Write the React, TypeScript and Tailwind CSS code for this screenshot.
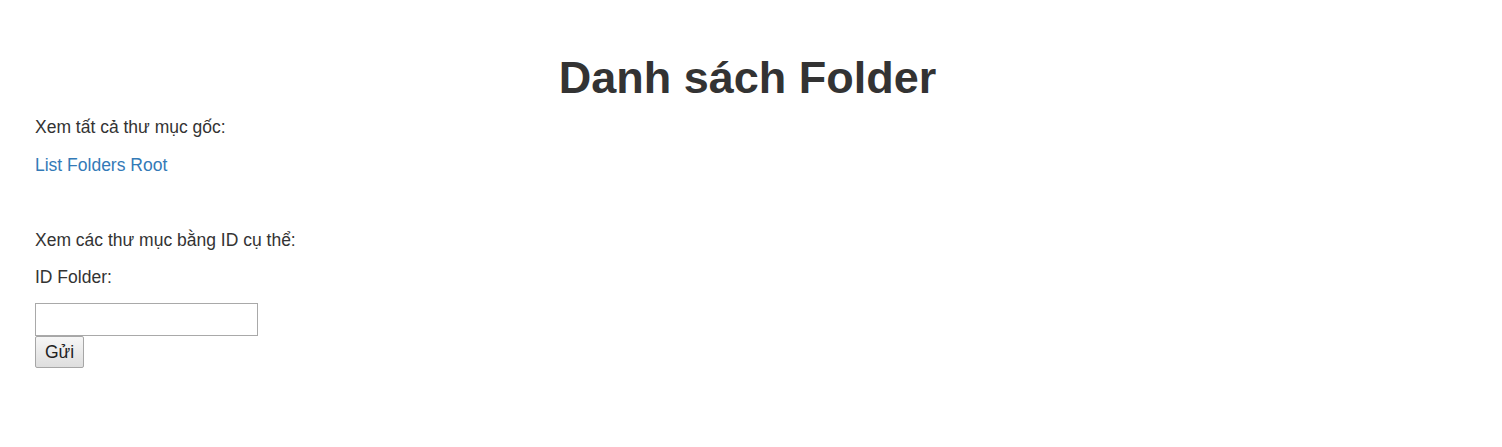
export default function App() {
  const handleSubmit = (event: any) => {
    event.preventDefault()
  }

  return (
    <div className="min-h-[447px] bg-white pl-[35px] pr-[42px] pt-[53px] font-['Liberation_Sans',Arial,sans-serif] text-[17.5px] leading-[25px] text-[#333333]">
      {/* Title */}
      <h1 className="mb-[12.5px] text-center text-[45px] font-bold leading-[49.5px]">Danh sách Folder</h1>

      {/* Root folders */}
      <p className="mb-[12.5px]">Xem tất cả thư mục gốc:</p>
      <p className="mb-[12.5px]">
        <a href="#" className="text-[#337ab7] hover:underline">List Folders Root</a>
      </p>

      {/* By ID */}
      <p className="mt-[50px] mb-[12.5px]">Xem các thư mục bằng ID cụ thể:</p>
      <form onSubmit={handleSubmit}>
        <p className="mb-[12.5px]">ID Folder:</p>
        <input
          type="text"
          name="id"
          className="block h-[33px] w-[223px] border border-[#a9a9a9] bg-white px-1 text-[17.5px] outline-none"
        />
        <button
          type="submit"
          className="block h-[32px] w-[49px] rounded-[2px] border border-[#a6a6a6] bg-gradient-to-b from-[#f6f6f6] to-[#dedede] text-[17.5px] leading-[30px] text-[#222]"
        >
          Gửi
        </button>
      </form>
    </div>
  )
}
